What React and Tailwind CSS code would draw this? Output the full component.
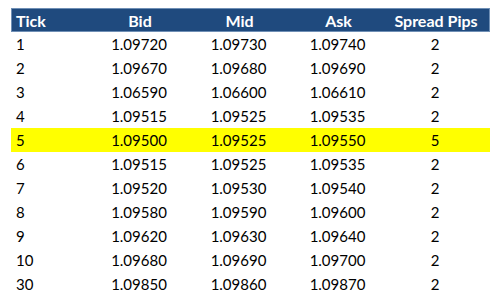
const rows = [
  ['1', '1.09720', '1.09730', '1.09740', '2'],
  ['2', '1.09670', '1.09680', '1.09690', '2'],
  ['3', '1.06590', '1.06600', '1.06610', '2'],
  ['4', '1.09515', '1.09525', '1.09535', '2'],
  ['5', '1.09500', '1.09525', '1.09550', '5'],
  ['6', '1.09515', '1.09525', '1.09535', '2'],
  ['7', '1.09520', '1.09530', '1.09540', '2'],
  ['8', '1.09580', '1.09590', '1.09600', '2'],
  ['9', '1.09620', '1.09630', '1.09640', '2'],
  ['10', '1.09680', '1.09690', '1.09700', '2'],
  ['30', '1.09850', '1.09860', '1.09870', '2'],
];

const cols = 'grid grid-cols-[78px_100px_99px_99px_96px]';

export default function App() {
  return (
    <main
      className="w-[490px] h-[307px] bg-white pt-[8px] pl-[11px] text-[15px] text-black"
      style={{ fontFamily: 'Lato, "Open Sans", sans-serif' }}
    >
      {/* Header */}
      <div className={`${cols} h-[24px] items-center bg-[#1f4a7e] text-white text-[16px] font-bold border border-[#6f8fb5]`}>
        <div className="pl-[4px]">Tick</div>
        <div className="text-center">Bid</div>
        <div className="text-center">Mid</div>
        <div className="text-center">Ask</div>
        <div className="text-center">Spread Pips</div>
      </div>

      {/* Rows */}
      {rows.map((r) => (
        <div
          key={r[0]}
          className={`${cols} h-[24px] items-center ${r[0] === '5' ? 'bg-[#ffff00]' : ''}`}
        >
          <div className="pl-[5px]">{r[0]}</div>
          <div className="text-center">{r[1]}</div>
          <div className="text-center">{r[2]}</div>
          <div className="text-center">{r[3]}</div>
          <div className="text-center">{r[4]}</div>
        </div>
      ))}
    </main>
  );
}
